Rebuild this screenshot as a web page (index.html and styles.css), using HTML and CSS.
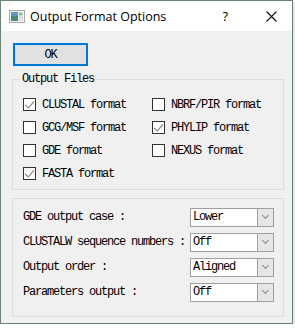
FILE: index.html
```html
<!DOCTYPE html>
<html>
<head>
    <meta charset="utf-8">
    <title>Output Format Options</title>
    <link rel="stylesheet" href="styles.css">
</head>
<body>
    <div class="window">
        <div class="titlebar">
            <svg class="app-icon" width="16" height="13" viewBox="0 0 16 13">
                <rect x="0.5" y="0.5" width="15" height="12" fill="#f4f4f4" stroke="#a9a9a9"/>
                <rect x="2" y="2" width="7" height="9" fill="#4a8a7c"/>
                <rect x="2" y="2" width="7" height="4" fill="#5f98b9"/>
                <rect x="10" y="2" width="4" height="9" fill="#dcdcdc"/>
                <rect x="10" y="3" width="3" height="2" fill="#7fb07f"/>
            </svg>
            <span class="title">Output Format Options</span>
            <span class="help">?</span>
            <svg class="close" width="11" height="11" viewBox="0 0 11 11">
                <path d="M0.5 0.5 L10.5 10.5 M10.5 0.5 L0.5 10.5" stroke="#111" stroke-width="1.1"/>
            </svg>
        </div>
        <div class="content">
            <button class="ok">OK</button>

            <fieldset class="group files">
                <legend>Output Files</legend>
                <div class="checks">
                    <label class="check"><span class="box on"></span>CLUSTAL format</label>
                    <label class="check"><span class="box"></span>NBRF/PIR format</label>
                    <label class="check"><span class="box"></span>GCG/MSF format</label>
                    <label class="check"><span class="box on"></span>PHYLIP format</label>
                    <label class="check"><span class="box"></span>GDE format</label>
                    <label class="check"><span class="box"></span>NEXUS format</label>
                    <label class="check"><span class="box on"></span>FASTA format</label>
                </div>
            </fieldset>

            <fieldset class="group options">
                <div class="row">
                    <span class="label">GDE output case :</span>
                    <div class="combo"><span class="value">Lower</span><span class="arrow"></span></div>
                </div>
                <div class="row">
                    <span class="label">CLUSTALW sequence numbers :</span>
                    <div class="combo"><span class="value">Off</span><span class="arrow"></span></div>
                </div>
                <div class="row">
                    <span class="label">Output order :</span>
                    <div class="combo"><span class="value">Aligned</span><span class="arrow"></span></div>
                </div>
                <div class="row">
                    <span class="label">Parameters output :</span>
                    <div class="combo"><span class="value">Off</span><span class="arrow"></span></div>
                </div>
            </fieldset>
        </div>
    </div>
</body>
</html>
```

FILE: styles.css
```css
* {
    margin: 0;
    padding: 0;
    box-sizing: border-box;
}
body {
    background: #fff;
    font-family: 'Liberation Mono', monospace;
    font-size: 12px;
    letter-spacing: -1.2px;
    color: #000;
}
.window {
    width: 293px;
    height: 324px;
    border: 1px solid #6b8472;
    background: #f0f0f0;
    box-shadow: 0 2px 8px rgba(0, 0, 0, 0.25);
    display: flex;
    flex-direction: column;
}
.titlebar {
    height: 30px;
    background: #fff;
    display: flex;
    align-items: center;
    padding-left: 8px;
}
.app-icon {
    margin-top: 1px;
}
.title {
    font-family: 'Open Sans', sans-serif;
    font-size: 12.5px;
    letter-spacing: 0;
    margin-left: 5px;
    flex: 1;
}
.help {
    font-family: 'Open Sans', sans-serif;
    font-size: 13px;
    letter-spacing: 0;
    margin-right: 38px;
}
.close {
    margin-right: 15px;
}
.content {
    flex: 1;
    padding: 12px 0 0 11px;
}
.ok {
    display: block;
    width: 75px;
    height: 23px;
    margin-left: 1px;
    border: 2px solid #0078d7;
    background: #e1e1e1;
    font-family: 'Liberation Mono', monospace;
    font-size: 12px;
    letter-spacing: -1.2px;
    line-height: 18px;
}
.group {
    width: 272px;
    border: 1px solid #dcdcdc;
    min-width: 0;
}
.files {
    margin-top: 7px;
    padding: 8px 0 4px 10px;
}
.files legend {
    margin-left: -3px;
    padding: 0 1px 0 2px;
    line-height: 12px;
}
.checks {
    display: grid;
    grid-template-columns: 129px 1fr;
    grid-auto-rows: 23px;
}
.check {
    display: flex;
    align-items: center;
}
.box {
    width: 13px;
    height: 13px;
    border: 1px solid #333;
    background: #fff;
    margin-right: 6px;
    position: relative;
}
.box.on::after {
    content: "";
    position: absolute;
    left: 3px;
    top: 0px;
    width: 4px;
    height: 8px;
    border: solid #777;
    border-width: 0 1px 1px 0;
    transform: rotate(40deg);
}
.options {
    margin-top: 8px;
    padding: 9px 9px 8px 10px;
}
.row {
    display: flex;
    align-items: flex-start;
    height: 25px;
}
.label {
    flex: 1;
    line-height: 19px;
}
.combo {
    width: 84px;
    height: 19px;
    border: 1px solid #a0a0a0;
    background: #fff;
    display: flex;
}
.value {
    flex: 1;
    padding-left: 2px;
    line-height: 17px;
}
.arrow {
    width: 16px;
    border-left: 1px solid #a0a0a0;
    background: #e6e6e6;
    position: relative;
}
.arrow::after {
    content: "";
    position: absolute;
    left: 5px;
    top: 4px;
    width: 4px;
    height: 4px;
    border: solid #888;
    border-width: 0 1px 1px 0;
    transform: rotate(45deg);
}
```
